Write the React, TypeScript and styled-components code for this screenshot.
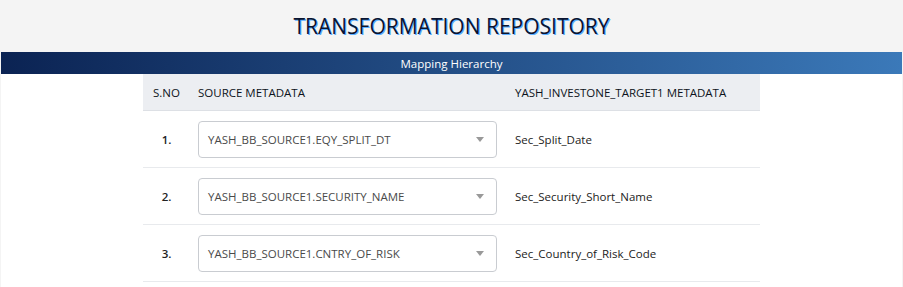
import React from "react";
import styled, { createGlobalStyle } from "styled-components";

const GlobalStyle = createGlobalStyle`
  html, body {
    margin: 0;
    padding: 0;
    background: #f4f4f4;
    font-family: "Open Sans", "Noto Sans", sans-serif;
  }
`;

const Page = styled.div`
  min-height: 100vh;
  display: flex;
  flex-direction: column;
`;

const Title = styled.h1`
  margin: 0;
  height: 52px;
  display: flex;
  align-items: center;
  justify-content: center;
  font-size: 21px;
  font-weight: 400;
  color: #0a1430;
  text-shadow: 1px 1px 0 #5aaeff;
`;

const Panel = styled.section`
  flex: 1;
  margin: 0 1px;
  background: #ffffff;
`;

const PanelBar = styled.div`
  height: 22px;
  display: flex;
  align-items: center;
  justify-content: center;
  background: linear-gradient(90deg, #0b2353 0%, #3b79b9 100%);
  color: #ffffff;
  font-size: 11.5px;
`;

const Table = styled.table`
  margin-left: 142px;
  width: 617px;
  table-layout: fixed;
  border-collapse: collapse;
  font-size: 11.5px;
  color: #222;
`;

const Head = styled.th<{ $align?: string; $width?: number }>`
  height: 36px;
  padding: 0 0 0 ${({ $align }) => ($align === "center" ? 0 : 8)}px;
  background: #eceef2;
  font-weight: 500;
  text-align: ${({ $align }) => $align || "left"};
  width: ${({ $width }) => ($width ? `${$width}px` : "auto")};
  border-bottom: 1px solid #dde0e5;
  color: #0d1320;
  white-space: nowrap;
`;

const Row = styled.tr`
  height: 57px;
  border-bottom: 1px solid #e8eaed;
`;

const Cell = styled.td<{ $align?: string; $bold?: boolean }>`
  padding: 0 0 0 ${({ $align }) => ($align === "center" ? 0 : 8)}px;
  text-align: ${({ $align }) => $align || "left"};
  font-weight: ${({ $bold }) => ($bold ? 600 : 400)};
  color: #222;
`;

const Select = styled.div`
  box-sizing: border-box;
  width: 299px;
  height: 37px;
  border: 1px solid #c9ccd1;
  border-radius: 4px;
  display: flex;
  align-items: center;
  justify-content: space-between;
  padding: 0 12px 0 9px;
  color: #4a4a4a;
  background: #fff;
`;

const Caret = styled.span`
  width: 0;
  height: 0;
  border-left: 4px solid transparent;
  border-right: 4px solid transparent;
  border-top: 5px solid #999999;
`;

const rows = [
  { source: "YASH_BB_SOURCE1.EQY_SPLIT_DT", target: "Sec_Split_Date" },
  { source: "YASH_BB_SOURCE1.SECURITY_NAME", target: "Sec_Security_Short_Name" },
  { source: "YASH_BB_SOURCE1.CNTRY_OF_RISK", target: "Sec_Country_of_Risk_Code" },
];

export default function App() {
  return (
    <Page>
      <GlobalStyle />
      <Title>TRANSFORMATION REPOSITORY</Title>
      <Panel>
        <PanelBar>Mapping Hierarchy</PanelBar>
        <Table>
          <thead>
            <tr>
              <Head $align="center" $width={47}>S.NO</Head>
              <Head $width={309}>SOURCE METADATA</Head>
              <Head>YASH_INVESTONE_TARGET1 METADATA</Head>
            </tr>
          </thead>
          <tbody>
            {rows.map((r, i) => (
              <Row key={r.source}>
                <Cell $align="center" $bold>
                  {i + 1}.
                </Cell>
                <Cell>
                  <Select>
                    <span>{r.source}</span>
                    <Caret />
                  </Select>
                </Cell>
                <Cell>{r.target}</Cell>
              </Row>
            ))}
          </tbody>
        </Table>
      </Panel>
    </Page>
  );
}
